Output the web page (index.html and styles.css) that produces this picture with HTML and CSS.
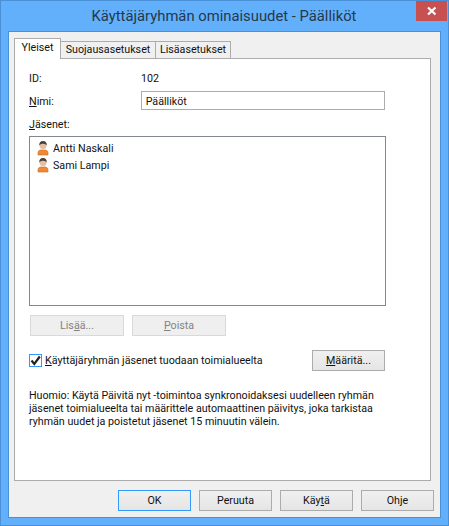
FILE: index.html
```html
<!DOCTYPE html>
<html lang="fi">
<head>
    <meta charset="UTF-8">
    <title>Käyttäjäryhmän ominaisuudet - Päälliköt</title>
    <link rel="stylesheet" href="styles.css">
</head>
<body>
    <div class="window">
        <div class="titlebar">
            <span class="title">Käyttäjäryhmän ominaisuudet - Päälliköt</span>
            <button class="close" type="button">
                <svg width="10" height="10" viewBox="0 0 10 10"><path d="M1 1.500 L8.500 8.500 M8.500 1.500 L1 8.500" stroke="#fff" stroke-width="2.200" fill="none"/></svg>
            </button>
        </div>
        <div class="client">
            <div class="tabs">
                <div class="tab active">Yleiset</div>
                <div class="tab">Suojausasetukset</div>
                <div class="tab">Lisäasetukset</div>
            </div>
            <div class="panel">
                <div class="row row-id">
                    <span class="field-label">ID:</span>
                    <span>102</span>
                </div>
                <div class="row row-name">
                    <label class="field-label" for="name"><u>N</u>imi:</label>
                    <input class="text-input" id="name" type="text" value="Päälliköt">
                </div>
                <div class="members-label"><u>J</u>äsenet:</div>
                <ul class="members">
                    <li class="member">
                        <svg class="user-icon" width="16" height="16" viewBox="0 0 16 16">
                            <path d="M3 15 V12.500 Q3 10.500 5.500 10 H10.500 Q13 10.500 13 12.500 V15 Z" fill="#ee8a32" stroke="#c96a1c" stroke-width="0.600"/>
                            <circle cx="8" cy="5.500" r="3.500" fill="#e3bfa4"/>
                            <path d="M4.300 5.500 Q4 1 8 1 Q12 1 11.700 5.500 Q10.500 3.500 8 3.800 Q5.500 3.500 4.300 5.500 Z" fill="#4a4036"/>
                        </svg>
                        Antti Naskali
                    </li>
                    <li class="member">
                        <svg class="user-icon" width="16" height="16" viewBox="0 0 16 16">
                            <path d="M3 15 V12.500 Q3 10.500 5.500 10 H10.500 Q13 10.500 13 12.500 V15 Z" fill="#ee8a32" stroke="#c96a1c" stroke-width="0.600"/>
                            <circle cx="8" cy="5.500" r="3.500" fill="#e3bfa4"/>
                            <path d="M4.300 5.500 Q4 1 8 1 Q12 1 11.700 5.500 Q10.500 3.500 8 3.800 Q5.500 3.500 4.300 5.500 Z" fill="#4a4036"/>
                        </svg>
                        Sami Lampi
                    </li>
                </ul>
                <div class="member-actions">
                    <button class="btn" type="button" disabled>Lis<u>ä</u>ä...</button>
                    <button class="btn" type="button" disabled><u>P</u>oista</button>
                </div>
                <div class="sync-row">
                    <label class="check-label">
                        <span class="checkbox">
                            <svg width="11" height="11" viewBox="0 0 11 11"><path d="M1.500 5.500 L4.300 9 L9.800 1.500" stroke="#222" stroke-width="2.200" fill="none"/></svg>
                        </span>
                        <span><u>K</u>äyttäjäryhmän jäsenet tuodaan toimialueelta</span>
                    </label>
                    <button class="btn" type="button"><u>M</u>ääritä...</button>
                </div>
                <p class="note">Huomio: Käytä Päivitä nyt -toimintoa synkronoidaksesi uudelleen ryhmän<br>jäsenet toimialueelta tai määrittele automaattinen päivitys, joka tarkistaa<br>ryhmän uudet ja poistetut jäsenet 15 minuutin välein.</p>
            </div>
            <div class="dialog-buttons">
                <button class="btn btn-default" type="button">OK</button>
                <button class="btn" type="button">Peruuta</button>
                <button class="btn" type="button">Käy<u>t</u>ä</button>
                <button class="btn" type="button">Ohje</button>
            </div>
        </div>
    </div>
</body>
</html>
```

FILE: styles.css
```css
* {
    box-sizing: border-box;
}

body {
    margin: 0;
    font-family: "Roboto", "Liberation Sans", sans-serif;
    font-size: 10.7px;
    color: #111;
}

.window {
    width: 449px;
    height: 526px;
    display: flex;
    flex-direction: column;
    background: #62b0fb;
    border: 1px solid #4a90d6;
    padding: 0 7px 7px;
}

.titlebar {
    height: 30px;
    display: flex;
    justify-content: center;
    position: relative;
}

.title {
    font-size: 14.8px;
    line-height: 30px;
    color: #25384d;
    padding-right: 1px;
}

.close {
    position: absolute;
    top: 0;
    right: -6px;
    width: 31px;
    height: 20px;
    padding: 0;
    border: none;
    background: #c75050;
    display: flex;
    align-items: center;
    justify-content: center;
}

.client {
    flex: 1;
    background: #f0f0f0;
    border: 1px solid #4a90d6;
    padding: 6px 6px 0 5px;
    display: flex;
    flex-direction: column;
}

.tabs {
    display: flex;
    height: 21px;
    align-items: flex-end;
    position: relative;
    z-index: 1;
    margin-bottom: -1px;
}

.tab {
    height: 18px;
    line-height: 16px;
    width: 76px;
    text-align: center;
    background: #f0f0f0;
    border: 1px solid #acacac;
    margin-left: -1px;
    white-space: nowrap;
}

.tab:nth-child(2) {
    width: 96px;
}

.tab.active {
    width: 47px;
    height: 21px;
    line-height: 17px;
    margin-left: 0;
    background: #fff;
    border-bottom: none;
}

.panel {
    height: 423px;
    margin-right: 3px;
    background: #fff;
    border: 1px solid #acacac;
    padding: 0 45px 0 14px;
}

.row {
    display: flex;
    align-items: center;
}

.row-id {
    height: 19px;
    margin-top: 10px;
}

.row-name {
    height: 19px;
    margin-top: 3px;
}

.row-name .field-label {
    padding-top: 1px;
}

.field-label {
    width: 112px;
}

.text-input {
    width: 245px;
    height: 19px;
    border: 1px solid #acacac;
    padding: 1px 4px 0;
    font: inherit;
    color: inherit;
}

.members-label {
    height: 15px;
    line-height: 15px;
    margin-top: 7px;
}

.members {
    list-style: none;
    width: 357px;
    height: 170px;
    margin: 4px 0 0;
    padding: 3px 5px;
    border: 1px solid #828790;
}

.member {
    height: 17px;
    display: flex;
    align-items: center;
    gap: 1px;
}

.user-icon {
    margin-right: 1px;
    margin-bottom: 2px;
}

.member-actions {
    display: flex;
    gap: 8px;
    margin: 9px 0 0 1px;
}

.btn {
    width: 73px;
    height: 21px;
    padding: 0;
    font: inherit;
    color: inherit;
    border: 1px solid #acacac;
    background: linear-gradient(#f0f0f0, #e5e5e5);
}

.member-actions .btn {
    width: 94px;
}

.btn:disabled {
    background: #efefef;
    border-color: #d9d9d9;
    color: #838383;
}

.btn-default {
    border-color: #3399ff;
}

.sync-row {
    display: flex;
    align-items: center;
    justify-content: space-between;
    width: 356px;
    margin-top: 14px;
}

.check-label {
    display: flex;
    align-items: center;
    gap: 3px;
}

.checkbox {
    width: 13px;
    height: 13px;
    background: #fff;
    border: 1px solid #3399ff;
    display: flex;
    align-items: center;
    justify-content: center;
}

.note {
    margin: 18px 0 0;
    line-height: 13px;
    white-space: nowrap;
}

.dialog-buttons {
    display: flex;
    justify-content: flex-end;
    gap: 8px;
    margin-top: 9px;
}
```
